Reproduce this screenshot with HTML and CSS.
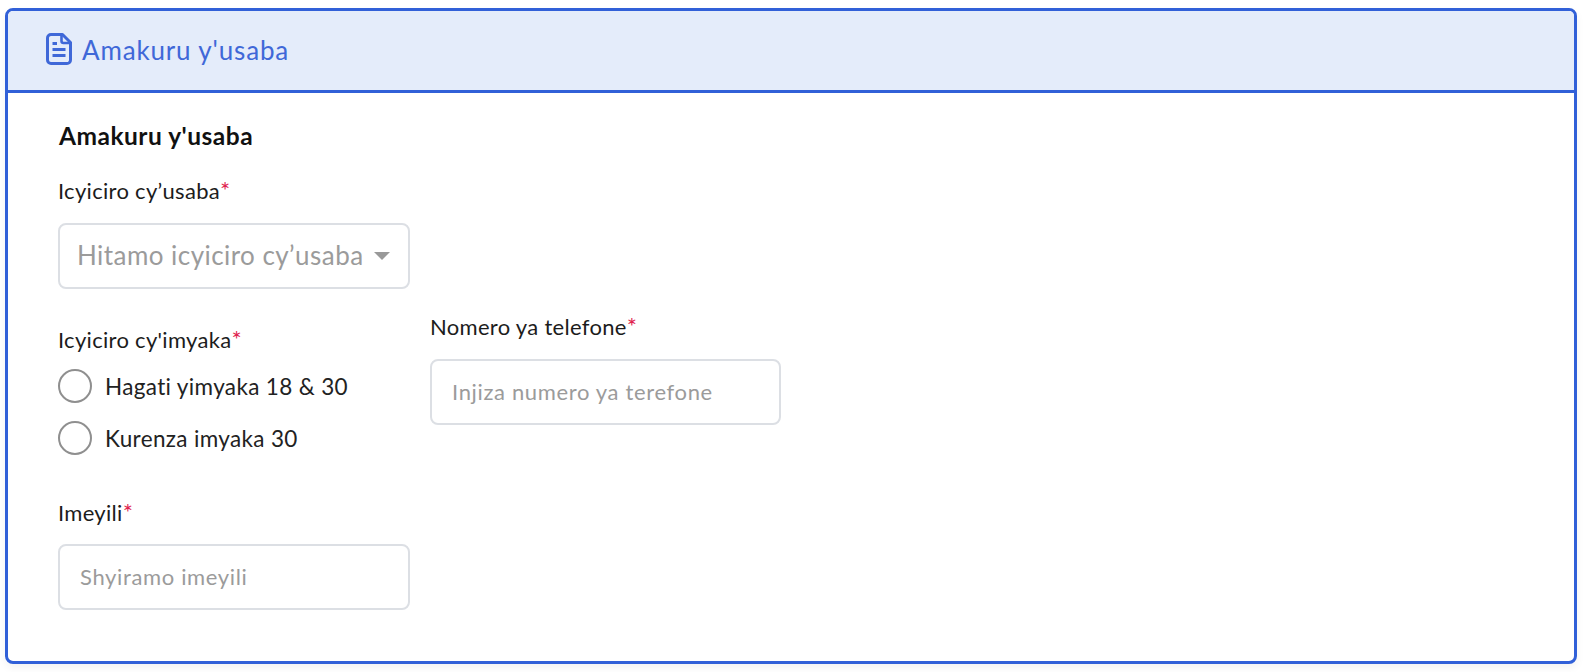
FILE: index.html
```html
<!DOCTYPE html>
<html lang="rw">
<head>
<meta charset="utf-8">
<title>Amakuru y'usaba</title>
<link rel="stylesheet" href="styles.css">
</head>
<body>
<section class="card">
  <header class="card-header">
    <svg class="doc-icon" viewBox="0 0 26 32" width="26" height="32" aria-hidden="true">
      <path d="M5 1.5h11.5L24.5 9.5V27a3.5 3.5 0 0 1-3.5 3.5H5A3.5 3.5 0 0 1 1.5 27V5A3.5 3.5 0 0 1 5 1.5z" fill="none" stroke="currentColor" stroke-width="3" stroke-linejoin="round"/>
      <path d="M15.5 2v6a2 2 0 0 0 2 2h6.500" fill="none" stroke="currentColor" stroke-width="2.600"/>
      <path d="M6.500 10.500h4.500M6.500 16.500h13M6.500 22.500h13" fill="none" stroke="currentColor" stroke-width="2.800"/>
    </svg>
    <h1 class="card-title">Amakuru y'usaba</h1>
  </header>
  <div class="card-body">
    <h2 class="section-title">Amakuru y'usaba</h2>
    <div class="field field-select">
      <label class="label">Icyiciro cy’usaba<span class="req">*</span></label>
      <div class="select">
        <span class="select-text">Hitamo icyiciro cy’usaba</span>
        <span class="caret"></span>
      </div>
    </div>
    <div class="row">
      <div class="field field-age">
        <span class="label">Icyiciro cy'imyaka<span class="req">*</span></span>
        <div class="radio-row"><span class="radio"></span><span class="radio-label">Hagati yimyaka 18 &amp; 30</span></div>
        <div class="radio-row"><span class="radio"></span><span class="radio-label">Kurenza imyaka 30</span></div>
      </div>
      <div class="field field-phone">
        <label class="label">Nomero ya telefone<span class="req">*</span></label>
        <div class="input">Injiza numero ya terefone</div>
      </div>
    </div>
    <div class="field field-email">
      <label class="label">Imeyili<span class="req">*</span></label>
      <div class="input">Shyiramo imeyili</div>
    </div>
  </div>
</section>
</body>
</html>
```

FILE: styles.css
```css
* { box-sizing: border-box; }
html, body { height: 100%; }
body {
  margin: 0;
  padding: 8px 9px 8px 5px;
  background: #fff;
  font-family: "Lato", "Open Sans", sans-serif;
  color: #1c1c1c;
  overflow: hidden;
}
.card {
  height: 656px;
  border: 3px solid #3160d8;
  border-radius: 8px;
  background: #fff;
  box-shadow: 0 4px 8px rgba(0, 0, 0, 0.05);
  overflow: hidden;
}
.card-header {
  height: 82px;
  display: flex;
  align-items: center;
  gap: 10px;
  padding: 0 0 2px 38px;
  background: #e4ecfa;
  border-bottom: 3px solid #3160d8;
  color: #3f68d8;
}
.doc-icon { flex: none; margin-bottom: 2px; }
.card-title { margin: 0; font-size: 26px; letter-spacing: 0.85px; font-weight: 400; }
.card-body { padding: 29px 0 0 50px; }
.section-title { margin: 0 0 0 1px; font-size: 24.5px; letter-spacing: 0.5px; line-height: 28px; font-weight: 700; color: #111; }
.label { display: block; font-size: 22px; letter-spacing: 0.3px; line-height: 26px; color: #1c1c1c; }
.req { color: #e0244f; font-size: 24px; line-height: 1; }
.field-select { margin-top: 28px; width: 352px; }
.select {
  margin-top: 19px;
  height: 66px;
  border: 2px solid #dcdfe4;
  border-radius: 8px;
  display: flex;
  align-items: center;
  justify-content: space-between;
  padding: 0 18px 2px 17px;
  color: #9b9b9b;
  font-size: 26px;
  letter-spacing: 0.45px;
}
.caret {
  flex: none;
  width: 0;
  height: 0;
  margin-top: 2px;
  border-left: 8px solid transparent;
  border-right: 8px solid transparent;
  border-top: 8px solid #999;
}
.row { display: flex; gap: 20px; align-items: flex-start; margin-top: 25px; }
.field-age { width: 352px; padding-top: 13px; }
.radio-row { display: flex; align-items: center; gap: 13px; height: 34px; margin-top: 18px; }
.field-age .label + .radio-row { margin-top: 16px; }
.radio { width: 34px; height: 34px; border: 2px solid #8f8f8f; border-radius: 50%; flex: none; }
.radio-label { font-size: 22.5px; letter-spacing: 0.35px; color: #222; }
.field-phone { width: 351px; }
.input {
  margin-top: 19px;
  height: 66px;
  border: 2px solid #dcdfe4;
  border-radius: 8px;
  display: flex;
  align-items: center;
  padding: 0 0 2px 20px;
  color: #9b9b9b;
  font-size: 22px;
  letter-spacing: 0.65px;
}
.field-email { margin-top: 45px; width: 352px; }
.field-email .input { margin-top: 18px; }
```
